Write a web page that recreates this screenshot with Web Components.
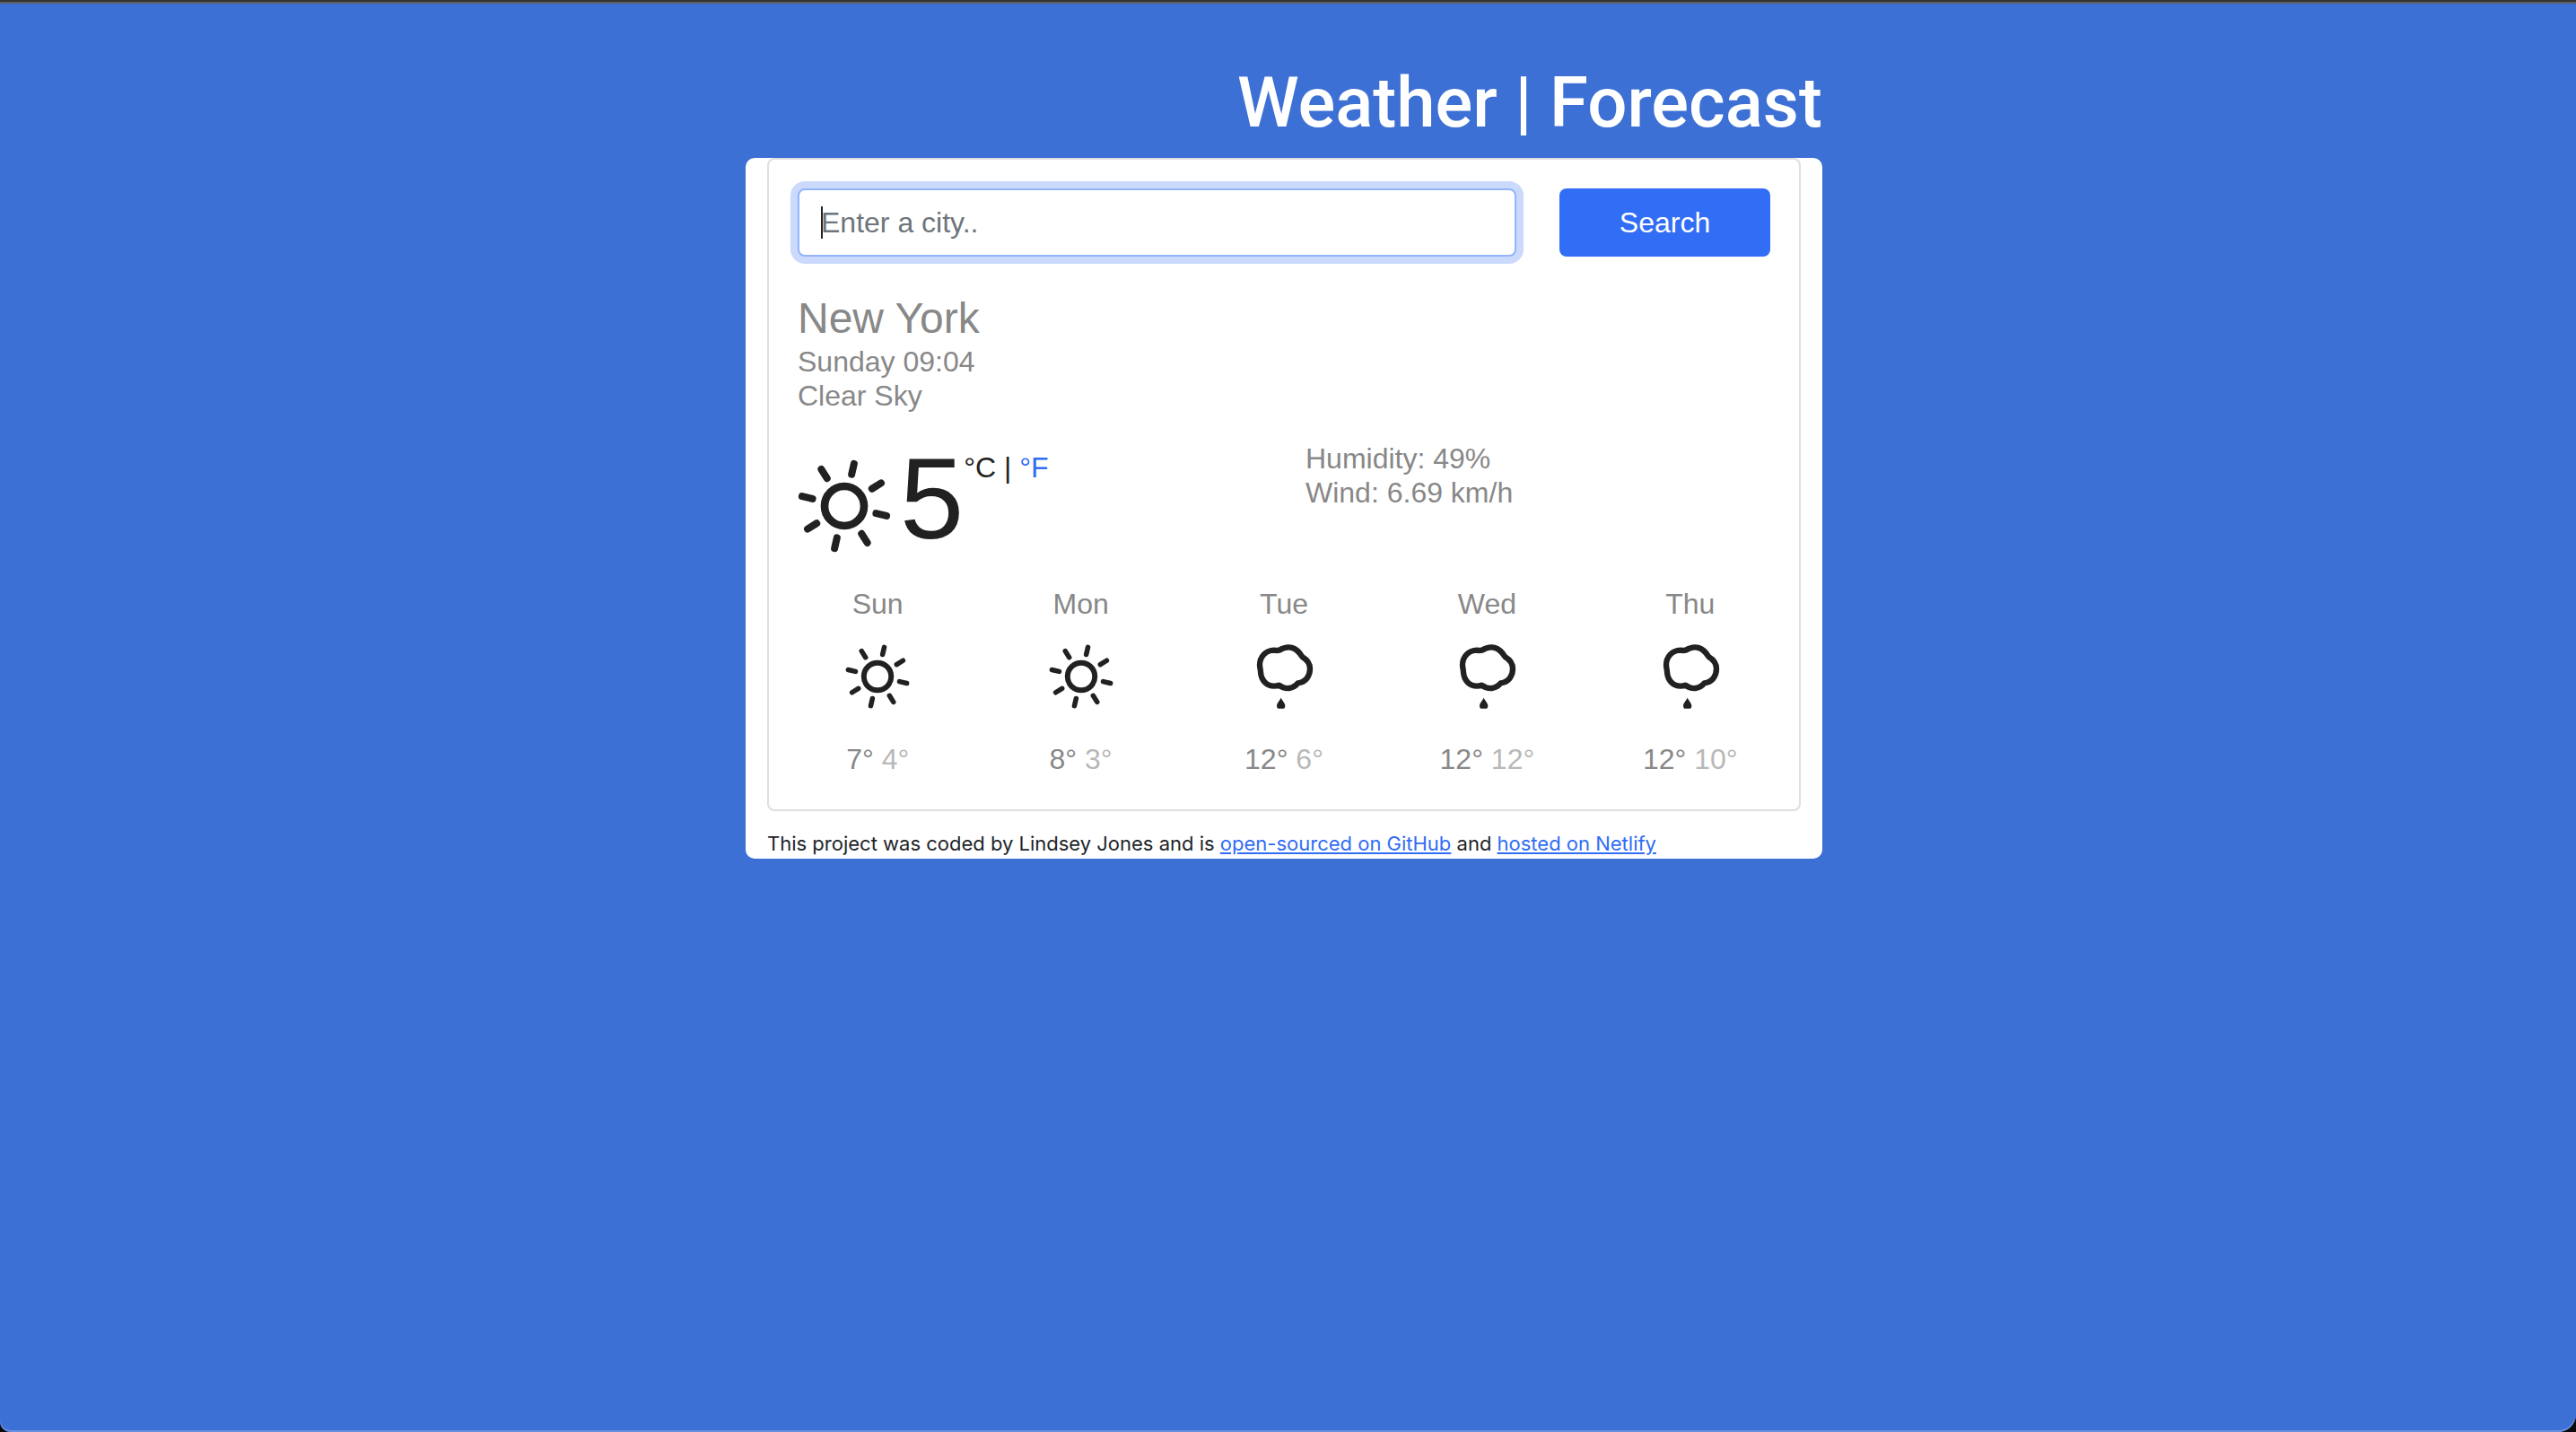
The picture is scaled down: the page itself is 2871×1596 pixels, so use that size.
<!DOCTYPE html>
<html lang="en">
<head>
<meta charset="utf-8">
<title>Weather | Forecast</title>
<style>
  html { background: #0a0a0a; height: 100%; }
  body { margin: 0; min-height: 100%; display: flex; font-family: "Liberation Sans", Arial, sans-serif; font-size: 32px; line-height: 38px; }
  weather-app { flex: 1; }
</style>
</head>
<body>
<weather-app></weather-app>

<script>
const icons = {
  sun: `<svg viewBox="-156 -156 312 312" fill="none" stroke="currentColor" stroke-linecap="round" aria-hidden="true">
    <circle r="66" stroke-width="26"/>
    <g stroke-width="24">${[13, 58, 103, 148, 193, 238, 283, 328].map(a => `<path d="M0-109V-145" transform="rotate(${a})"/>`).join("")}</g>
  </svg>`,
  rain: `<svg viewBox="0 0 216 216" aria-hidden="true">
    <path d="M92 20Q84 22 75 20C46 21 27 42 27 70C27 78 30 84 30 94C32 122 51 140 75 140Q84 140 91 137C113 153 139 150 155 130C181 127 195 106 195 82C195 65 184 51 169 42C149 8 122 2 92 20Z" fill="none" stroke="currentColor" stroke-width="19" stroke-linejoin="round"/>
    <path d="M98 179C103 190 112 196 112 206Q112 212 108 215H88Q84 212 84 206C84 196 93 190 98 179Z" fill="currentColor"/>
  </svg>`
};

function define(name, html, setup) {
  customElements.define(name, class extends HTMLElement {
    connectedCallback() {
      if (this.shadowRoot) return;
      const root = this.attachShadow({ mode: "open" });
      const template = document.createElement("template");
      template.innerHTML = html;
      root.append(template.content.cloneNode(true));
      if (setup) setup(this, root);
    }
  });
}

define("weather-icon", `
  <style>
    :host { display: block; color: #212121; }
    svg { display: block; width: 100%; height: 100%; }
  </style>
  <div id="art"></div>`,
  (host, root) => { root.getElementById("art").innerHTML = icons[host.getAttribute("name")] || ""; });

define("weather-search", `
  <style>
    :host { display: block; }
    form { display: grid; grid-template-columns: 849fr 283fr; margin: 0 -24px; }
    .cell { padding: 0 24px; display: flex; }
    input, button { box-sizing: border-box; width: 100%; height: 76px; font: inherit; line-height: 48px; border-radius: 8px; margin: 0; }
    input {
      padding: 12px 24px; border: 2px solid #92b5f9; outline: 0; color: #212529; caret-color: transparent;
      background: linear-gradient(#212529, #212529) 24px 18px / 2px 36px no-repeat #fff;
      box-shadow: 0 0 0 8px #cbd9fc;
    }
    input::placeholder { color: #6e757c; opacity: 1; }
    button { border: 0; background: #316df5; color: #fff; }
  </style>
  <form>
    <div class="cell"><input type="search" aria-label="City" placeholder="Enter a city.." autocomplete="off"></div>
    <div class="cell"><button type="button">Search</button></div>
  </form>`);

define("weather-current", `
  <style>
    :host { display: block; color: #888; }
    h2 { margin: 0; font-size: 48px; line-height: 58px; font-weight: 400; }
    ul { list-style: none; margin: 0; padding: 0; }
    .now { display: grid; grid-template-columns: 1fr 1fr; column-gap: 48px; margin-top: 32px; }
    .temp { display: flex; align-items: flex-start; color: #212121; }
    weather-icon { width: 104px; height: 104px; margin: 20px 10px 0 0; }
    .value { font-size: 128px; line-height: 128px; }
    .units { padding-top: 10px; }
    a { color: #316df5; text-decoration: none; }
  </style>
  <h2>New York</h2>
  <ul><li>Sunday 09:04</li><li>Clear Sky</li></ul>
  <div class="now">
    <div class="temp">
      <weather-icon name="sun"></weather-icon>
      <span class="value">5</span>
      <span class="units">°C | <a href="#">°F</a></span>
    </div>
    <ul><li>Humidity: 49%</li><li>Wind: 6.69 km/h</li></ul>
  </div>`);

define("forecast-day", `
  <style>
    :host { display: flex; flex-direction: column; align-items: center; color: #888; }
    weather-icon { width: 72px; height: 72px; margin: 26px 0 37px; }
    .min { color: #b8b8b8; }
  </style>
  <div><slot></slot></div>
  <weather-icon></weather-icon>
  <div><span class="max"></span> <span class="min"></span></div>`,
  (host, root) => {
    const icon = document.createElement("weather-icon");
    icon.setAttribute("name", host.getAttribute("icon"));
    root.querySelector("weather-icon").replaceWith(icon);
    root.querySelector(".max").textContent = host.getAttribute("max") + "°";
    root.querySelector(".min").textContent = host.getAttribute("min") + "°";
  });

define("weather-card", `
  <style>
    :host { display: block; box-sizing: border-box; border: 2px solid #dedfe2; border-radius: 8px; padding: 32px 32px 37px; }
    weather-current { margin-top: 40px; }
    .days { display: grid; grid-template-columns: repeat(5, 1fr); margin: 34px -24px 0; }
  </style>
  <weather-search></weather-search>
  <weather-current></weather-current>
  <div class="days">
    <forecast-day icon="sun" max="7" min="4">Sun</forecast-day>
    <forecast-day icon="sun" max="8" min="3">Mon</forecast-day>
    <forecast-day icon="rain" max="12" min="6">Tue</forecast-day>
    <forecast-day icon="rain" max="12" min="12">Wed</forecast-day>
    <forecast-day icon="rain" max="12" min="10">Thu</forecast-day>
  </div>`);

define("site-credit", `
  <style>
    :host { display: block; margin-top: 19px; font: 22px/34px Inter, sans-serif; color: #212529; }
    a { color: #316df5; text-decoration: underline; }
  </style>
  This project was coded by Lindsey Jones and is <a href="#">open-sourced on GitHub</a> and <a href="#">hosted on Netlify</a>`);

define("weather-app", `
  <style>
    :host {
      display: block; box-sizing: border-box; background: #3d70d5;
      border-top: 2px solid #333; box-shadow: inset 0 2px #5f5f5f, inset 0 -2px #6a90df;
      border-radius: 0 0 20px 12px; padding: 65px 9px 0 0;
    }
    main { max-width: 1200px; margin: 0 auto; }
    h1 { margin: 0 0 13px; color: #fff; font: 500 78px/96px Roboto, sans-serif; text-align: right; }
    .panel { background: #fff; border-radius: 10px; padding: 0 24px; }
  </style>
  <main>
    <h1>Weather | Forecast</h1>
    <div class="panel">
      <weather-card></weather-card>
      <site-credit></site-credit>
    </div>
  </main>`);
</script>
</body>
</html>
